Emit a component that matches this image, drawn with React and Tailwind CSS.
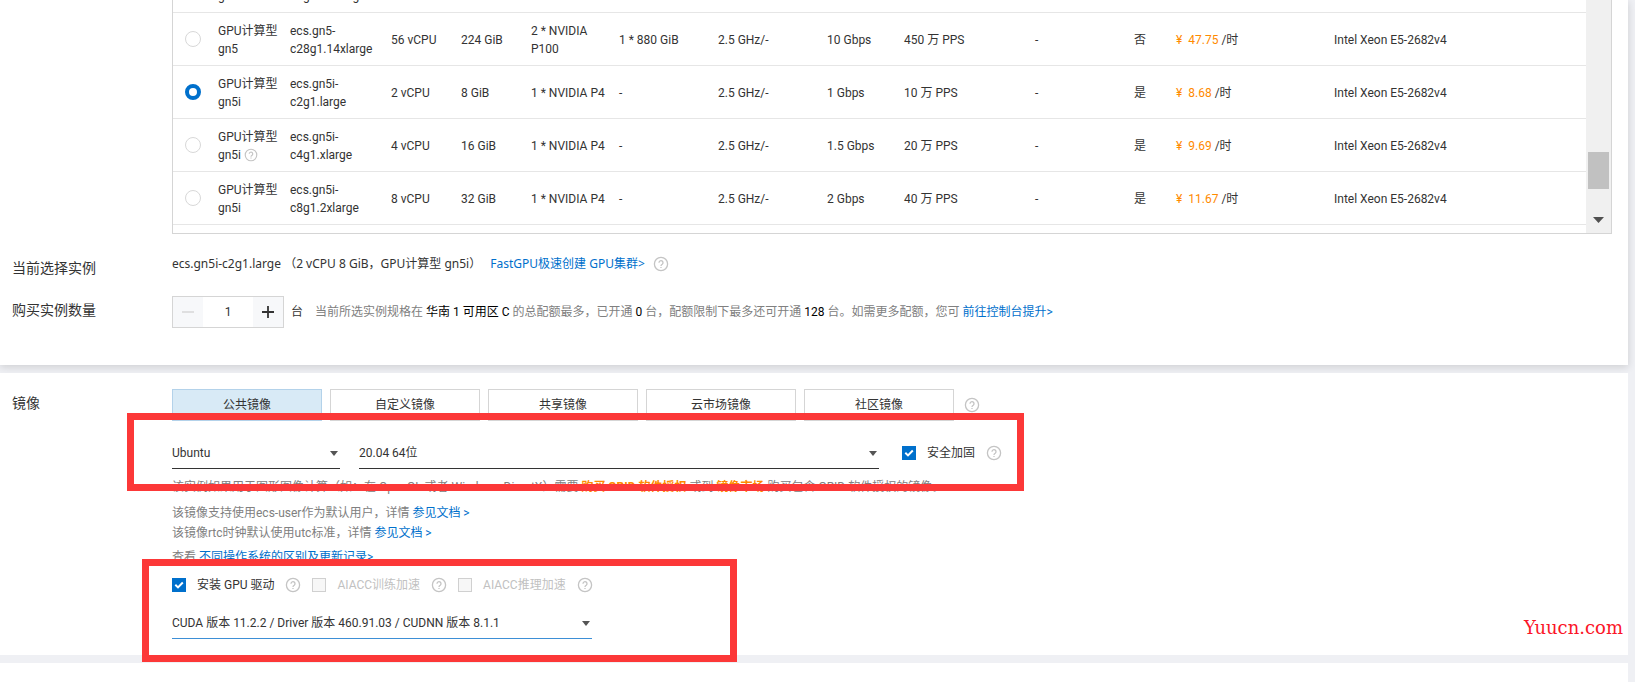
import { useState } from "react"

const INSTANCES = [
  { family: "gn5", type: "ecs.gn5-\nc28g1.14xlarge", cpu: "56 vCPU", mem: "224 GiB", gpu: "2 * NVIDIA\nP100", disk: "1 * 880 GiB", net: "10 Gbps", pps: "450", ipv6: "否", price: "47.75" },
  { family: "gn5i", type: "ecs.gn5i-\nc2g1.large", cpu: "2 vCPU", mem: "8 GiB", gpu: "1 * NVIDIA P4", disk: "-", net: "1 Gbps", pps: "10", ipv6: "是", price: "8.68" },
  { family: "gn5i", type: "ecs.gn5i-\nc4g1.xlarge", cpu: "4 vCPU", mem: "16 GiB", gpu: "1 * NVIDIA P4", disk: "-", net: "1.5 Gbps", pps: "20", ipv6: "是", price: "9.69", help: true },
  { family: "gn5i", type: "ecs.gn5i-\nc8g1.2xlarge", cpu: "8 vCPU", mem: "32 GiB", gpu: "1 * NVIDIA P4", disk: "-", net: "2 Gbps", pps: "40", ipv6: "是", price: "11.67" },
]

const IMAGE_TABS = ["公共镜像", "自定义镜像", "共享镜像", "云市场镜像", "社区镜像"]

function HelpIcon({ small }) {
  return (
    <svg
      viewBox="0 0 16 16"
      className={small ? "inline-block h-[14px] w-[14px] align-[-3px]" : "h-4 w-4 shrink-0"}
      fill="none"
      stroke="#c4c4c4"
      strokeWidth="1.3"
      aria-hidden="true"
    >
      <circle cx="8" cy="8" r="6.6" />
      <path d="M6 6.7a2 2 0 1 1 3.2 1.6C8.4 8.8 8 9.1 8 10" />
      <path d="M8 10.9v1.2" />
    </svg>
  )
}

function Checkbox({ label, ...props }) {
  return (
    <label className="flex items-center gap-[11px] text-[#333] has-disabled:text-[#c1c1c1]">
      <span className="grid">
        <input
          type="checkbox"
          className="peer col-start-1 row-start-1 h-[14px] w-[14px] appearance-none border border-[#d0d0d0] bg-white checked:border-[#0070cc] checked:bg-[#0070cc] disabled:bg-[#f7f7f7]"
          {...props}
        />
        <svg
          viewBox="0 0 14 14"
          className="pointer-events-none invisible col-start-1 row-start-1 h-[14px] w-[14px] peer-checked:visible"
          fill="none"
          stroke="#fff"
          strokeWidth="2"
        >
          <path d="M3.3 6.8 6 9.4l4.8-4.9" />
        </svg>
      </span>
      {label}
    </label>
  )
}

function Select({ label, options, className }) {
  return (
    <div className={`grid items-center ${className}`}>
      <select
        aria-label={label}
        className="col-start-1 row-start-1 h-8 w-full appearance-none border-b border-inherit bg-transparent pr-5 text-[#333] outline-none"
      >
        {options.map((option) => (
          <option key={option}>{option}</option>
        ))}
      </select>
      <svg
        viewBox="0 0 8 5"
        className="pointer-events-none col-start-1 row-start-1 mr-[2px] h-[5px] w-2 justify-self-end"
        fill="#555"
      >
        <path d="M0 0h8L4 5z" />
      </svg>
    </div>
  )
}

function FormRow({ label, children }) {
  return (
    <div className="flex">
      <div className="w-40 shrink-0 pt-1 text-sm leading-5">{label}</div>
      <div className="min-w-0 flex-1">{children}</div>
    </div>
  )
}

function InstanceTable() {
  const [selected, setSelected] = useState(1)

  return (
    <div className="mr-4 ml-40 flex h-[234px] border border-t-0 border-[#d5d5d5]">
      <div className="flex min-w-0 flex-1 flex-col justify-end overflow-hidden pb-2">
        <table className="w-full table-fixed border-collapse">
          <colgroup>
            <col className="w-[37px]" />
            <col className="w-[72px]" />
            <col className="w-[101px]" />
            <col className="w-[70px]" />
            <col className="w-[70px]" />
            <col className="w-[88px]" />
            <col className="w-[99px]" />
            <col className="w-[109px]" />
            <col className="w-[77px]" />
            <col className="w-[131px]" />
            <col className="w-[99px]" />
            <col className="w-[42px]" />
            <col className="w-[158px]" />
            <col />
          </colgroup>
          <tbody>
            {/* scrolled mostly out of view */}
            <tr className="h-[53px] border-b border-[#e6e6e6] whitespace-pre *:pt-[2px] *:pl-2">
              <td />
              <td>GPU计算型{"\n"}gn5</td>
              <td>ecs.gn5-{"\n"}c8g1.14xlarge</td>
              <td colSpan={11} />
            </tr>
            {INSTANCES.map((row, i) => (
              <tr
                key={row.type}
                className="h-[53px] border-b border-[#e6e6e6] whitespace-pre *:pl-2 *:not-first:pt-[2px]"
              >
                <td>
                  <input
                    type="radio"
                    name="instance"
                    aria-label={row.type}
                    checked={selected === i}
                    onChange={() => setSelected(i)}
                    className="ml-1 block h-4 w-4 appearance-none rounded-full border border-[#d8d8d8] bg-white checked:border-4 checked:border-[#0070cc]"
                  />
                </td>
                <td>
                  GPU计算型{"\n"}
                  {row.family} {row.help && <HelpIcon small />}
                </td>
                <td>{row.type}</td>
                <td>{row.cpu}</td>
                <td>{row.mem}</td>
                <td>{row.gpu}</td>
                <td>{row.disk}</td>
                <td>2.5 GHz/-</td>
                <td>{row.net}</td>
                <td>{row.pps} 万 PPS</td>
                <td>-</td>
                <td>{row.ipv6}</td>
                <td>
                  <span className="text-[#ff8a00]">¥&nbsp; {row.price}</span> /时
                </td>
                <td>Intel Xeon E5-2682v4</td>
              </tr>
            ))}
          </tbody>
        </table>
      </div>
      <div className="flex w-[25px] flex-col items-center justify-end gap-7 bg-[#f0f0f0] pb-[10px]">
        <div className="h-[37px] w-[21px] bg-[#c1c1c1]" />
        <svg viewBox="0 0 11 6" className="h-[6px] w-[11px]" fill="#505050">
          <path d="M0 0h11L5.5 6z" />
        </svg>
      </div>
    </div>
  )
}

function Quantity() {
  const [count, setCount] = useState(1)

  return (
    <div className="flex h-8 w-28 border border-[#d5d5d5]">
      <button
        aria-label="减少"
        disabled={count <= 1}
        onClick={() => setCount(count - 1)}
        className="flex w-[30px] items-center justify-center bg-[#f7f8fa] text-[#333] disabled:text-[#d5d5d5]"
      >
        <svg viewBox="0 0 12 12" className="h-3 w-3" stroke="currentColor" strokeWidth="1.4">
          <path d="M0 6h12" />
        </svg>
      </button>
      <input
        aria-label="购买实例数量"
        value={count}
        onChange={(e) => setCount(Number(e.target.value) || 1)}
        className="min-w-0 flex-1 text-center outline-none"
      />
      <button
        aria-label="增加"
        onClick={() => setCount(count + 1)}
        className="flex w-[30px] items-center justify-center bg-[#f7f8fa] text-[#333]"
      >
        <svg viewBox="0 0 12 12" className="h-3 w-3" stroke="currentColor" strokeWidth="1.8">
          <path d="M0 6h12M6 0v12" />
        </svg>
      </button>
    </div>
  )
}

export default function App() {
  const [tab, setTab] = useState(IMAGE_TABS[0])

  return (
    <div className="relative flex min-h-screen flex-col gap-2 overflow-hidden bg-[#eff0f4] pr-[7px] font-[Roboto,'Noto_Sans_CJK_SC',sans-serif] text-xs leading-[18px] text-[#333]">
      <section className="bg-white pb-[37px] pl-3 shadow-[0_2px_8px_rgba(0,0,0,0.14)]">
        <InstanceTable />
        <div className="mt-5 flex flex-col gap-[18px]">
          <FormRow label="当前选择实例">
            <div className="flex h-5 items-center font-['Noto_Sans','Noto_Sans_CJK_SC',sans-serif]">
              <span>ecs.gn5i-c2g1.large （2 vCPU 8 GiB，GPU计算型 gn5i）</span>
              <a href="#fastgpu" className="mr-2 ml-[9px] text-[#0070cc]">
                FastGPU极速创建 GPU集群&gt;
              </a>
              <HelpIcon />
            </div>
          </FormRow>
          <FormRow label="购买实例数量">
            <div className="flex items-center">
              <Quantity />
              <span className="mr-3 ml-[7px]">台</span>
              <p className="text-[#808080]">
                当前所选实例规格在 <span className="text-black">华南 1 可用区 C</span> 的总配额最多，已开通{" "}
                <span className="text-black">0</span> 台，配额限制下最多还可开通{" "}
                <span className="text-black">128</span> 台。如需更多配额，您可{" "}
                <a href="#quota" className="text-[#0070cc]">
                  前往控制台提升&gt;
                </a>
              </p>
            </div>
          </FormRow>
        </div>
      </section>

      <section className="relative bg-white pt-4 pb-4 pl-3">
        <FormRow label="镜像">
          <div className="flex items-center gap-[10px]">
            <div className="flex gap-2">
              {IMAGE_TABS.map((name) => (
                <button
                  key={name}
                  onClick={() => setTab(name)}
                  className={`h-8 w-[150px] border ${
                    tab === name ? "border-[#b3d2ea] bg-[#d8eaf6]" : "border-[#d5d5d5] bg-white"
                  }`}
                >
                  {name}
                </button>
              ))}
            </div>
            <HelpIcon />
          </div>
          <div className="mt-4 flex items-center">
            <Select label="操作系统" options={["Ubuntu"]} className="mr-[19px] w-42 border-[#333]" />
            <Select label="版本" options={["20.04 64位"]} className="mr-[23px] w-[520px] border-[#333]" />
            <div className="flex items-center gap-[11px]">
              <Checkbox label="安全加固" defaultChecked />
              <HelpIcon />
            </div>
          </div>
          <div className="mt-2 leading-5 text-[#808080]">
            <p>
              该实例如果用于图形图像计算（如：在 OpenGL 或者 Windows DirectX）需要{" "}
              <a href="#grid" className="font-bold text-[#ff8a00]">
                购买 GRID 软件授权
              </a>{" "}
              或到{" "}
              <a href="#market" className="font-bold text-[#ff8a00]">
                镜像市场
              </a>{" "}
              购买包含 GRID 软件授权的镜像。
            </p>
            <p className="mt-[6px]">
              该镜像支持使用ecs-user作为默认用户，详情{" "}
              <a href="#user" className="text-[#0070cc]">
                参见文档 &gt;
              </a>
            </p>
            <p>
              该镜像rtc时钟默认使用utc标准，详情{" "}
              <a href="#rtc" className="text-[#0070cc]">
                参见文档 &gt;
              </a>
            </p>
            <p className="mt-1">
              查看{" "}
              <a href="#changelog" className="text-[#0070cc]">
                不同操作系统的区别及更新记录&gt;
              </a>
            </p>
          </div>
          <div className="mt-2 flex h-5 items-center gap-[11px]">
            <Checkbox label="安装 GPU 驱动" defaultChecked />
            <HelpIcon />
            <Checkbox label="AIACC训练加速" disabled />
            <HelpIcon />
            <Checkbox label="AIACC推理加速" disabled />
            <HelpIcon />
          </div>
          <Select
            label="驱动版本"
            options={["CUDA 版本 11.2.2 / Driver 版本 460.91.03 / CUDNN 版本 8.1.1"]}
            className="mt-3 w-[420px] border-[#3d8fd6]"
          />
        </FormRow>
      </section>

      <section className="flex-1 bg-white" />

      {/* highlight frames and site mark drawn over the form */}
      <div className="pointer-events-none absolute top-[413px] left-[127px] h-[78px] w-[897px] border-[7px] border-[#fc3838]" />
      <div className="pointer-events-none absolute top-[559px] left-[142px] h-[103px] w-[595px] border-[7px] border-[#fc3838]" />
      <p className="absolute top-[616px] right-3 font-['DejaVu_Serif',serif] text-lg leading-6 text-[#fb1528]">
        Yuucn.com
      </p>
    </div>
  )
}
